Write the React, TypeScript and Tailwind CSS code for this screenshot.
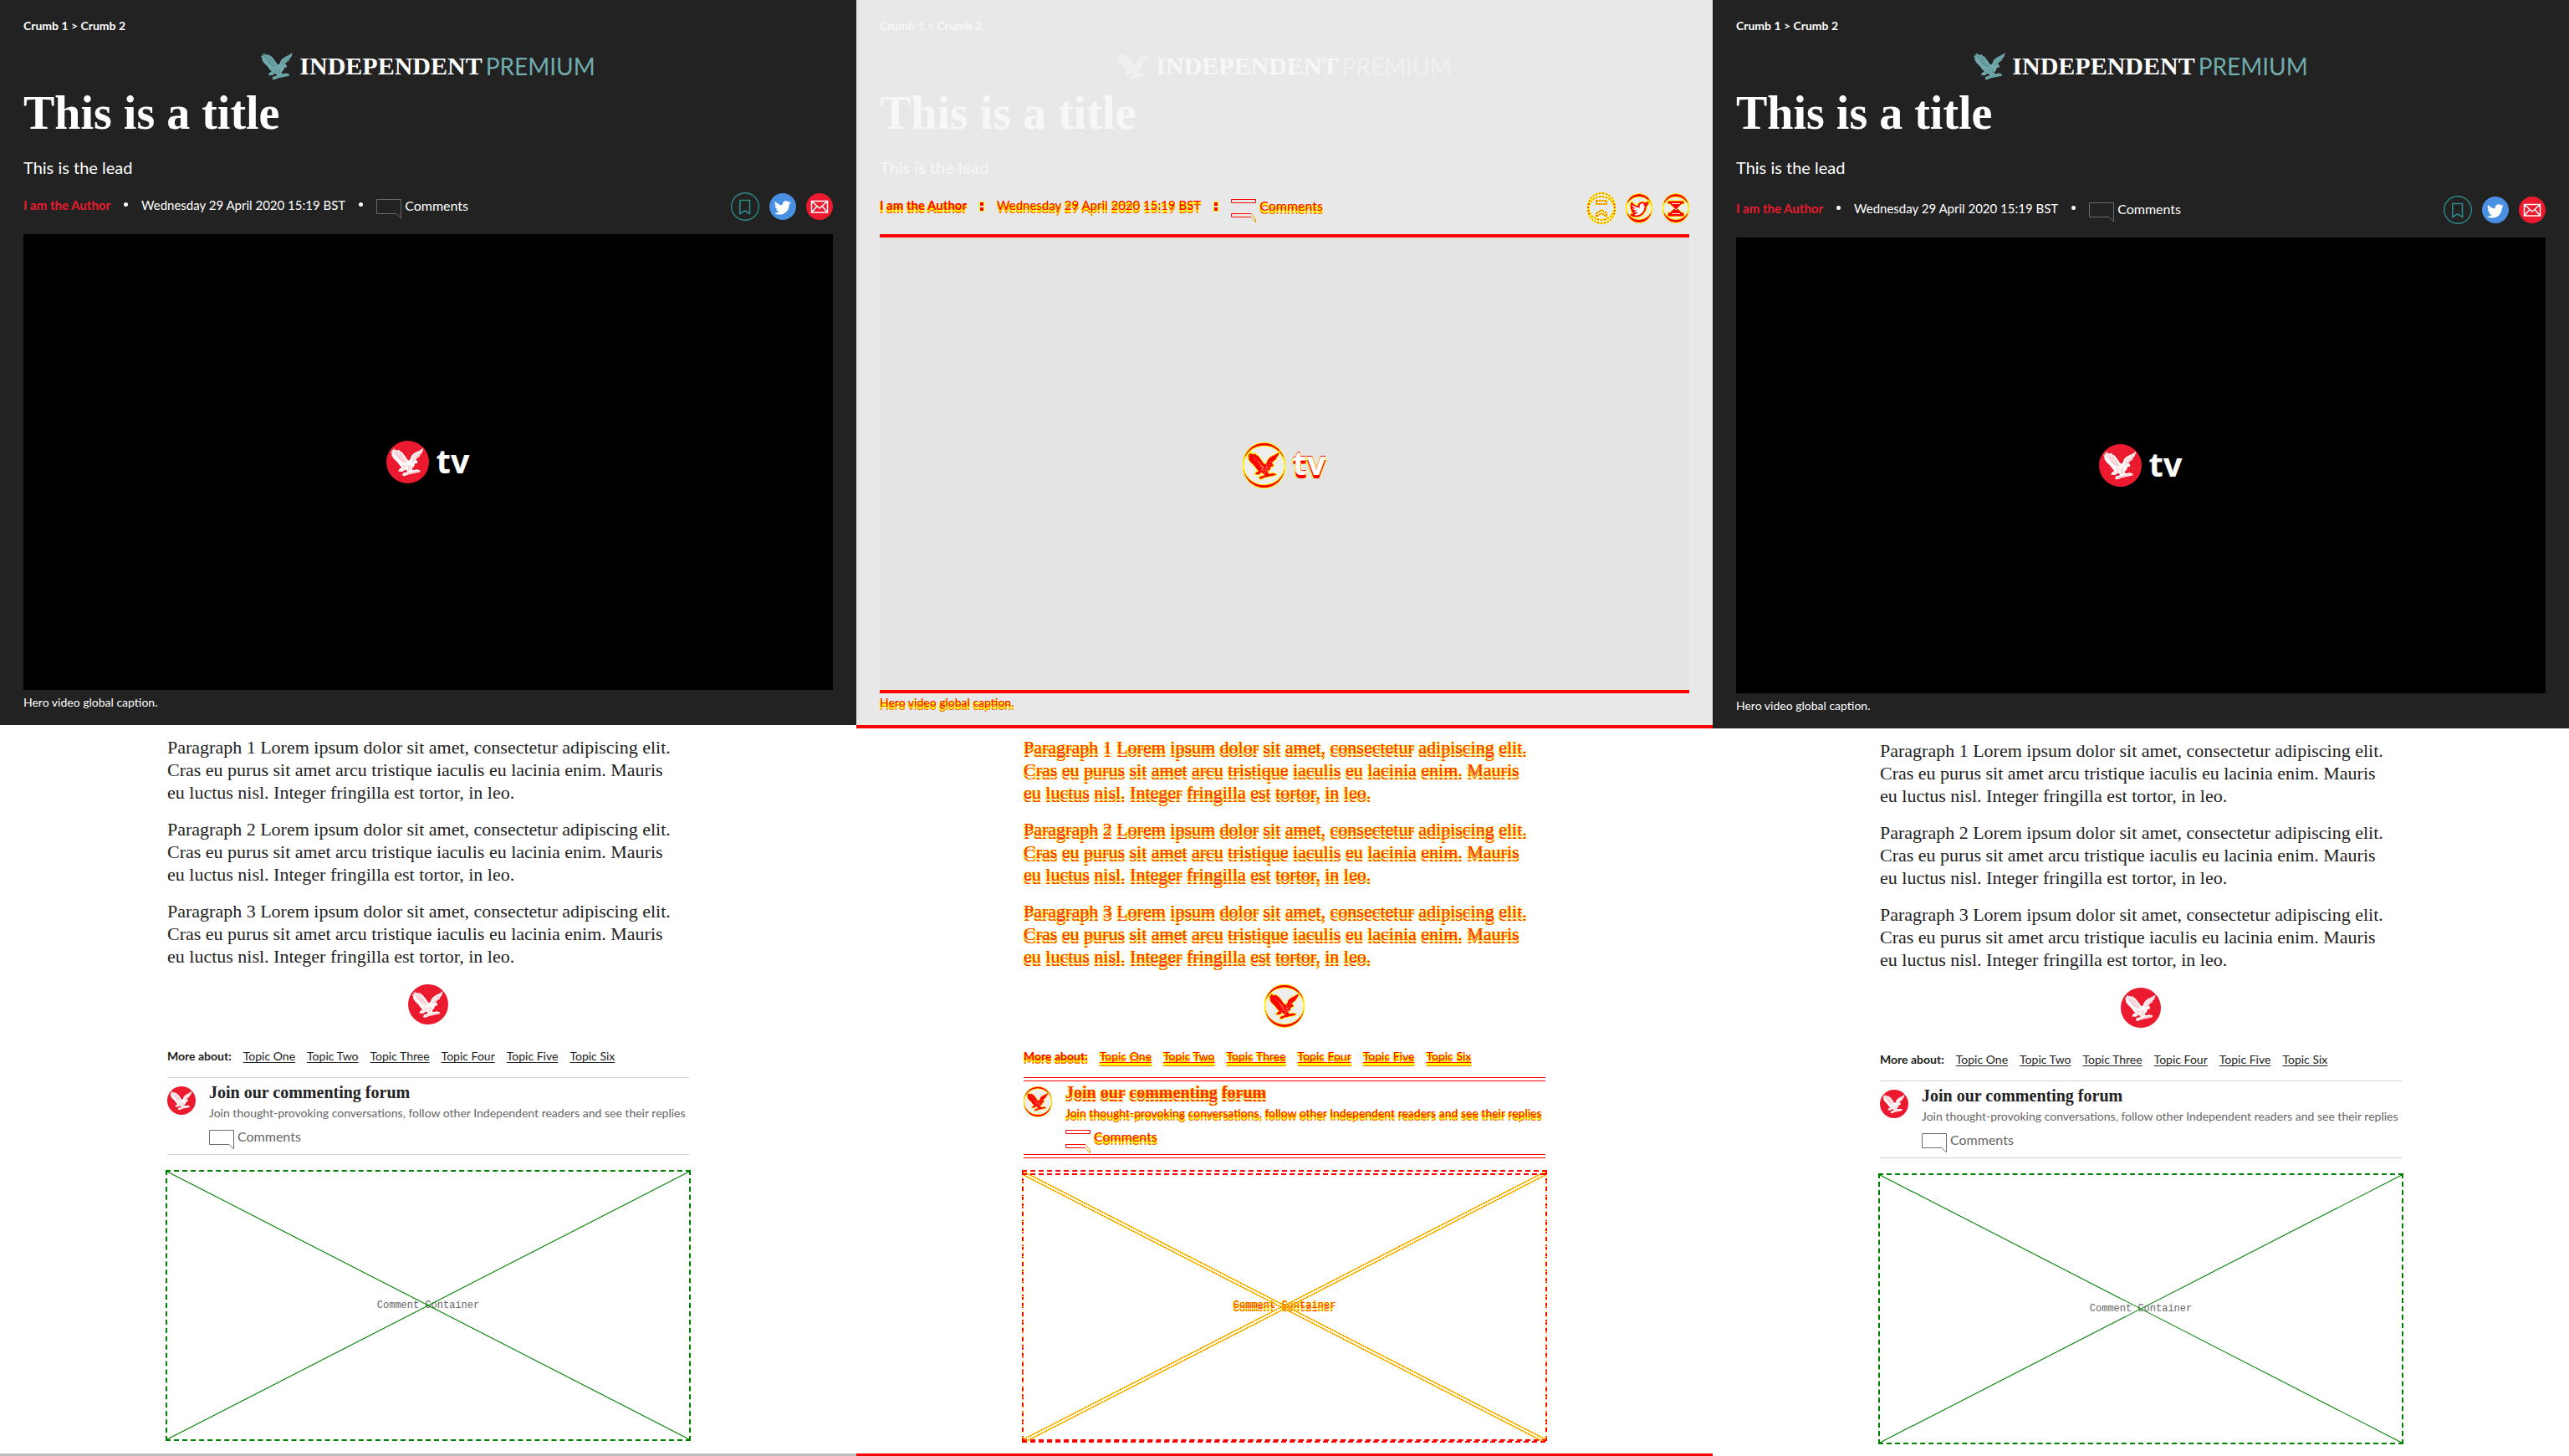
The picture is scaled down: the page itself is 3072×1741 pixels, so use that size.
import React from "react";

type Variant = "before" | "diff" | "after";

const WINGS =
  "M98 106 L103 115 L107 112 L111 117 L116 112 L121 119 L127 121 L137 134 L146 147 L151 152 L157 147 L160 137 L167 129 L176 123 L190 116 L204 107 L201 119 L197 127 L192 131 L193 135 L184 141 L177 148 L183 155 L182 163 L177 161 L173 164 L171 172 L163 180 L166 186 L181 183 L193 187 L191 193 L176 196 L152 201 L137 207 L129 205 L132 196 L144 193 L147 189 L140 184 L129 191 L114 190 L119 181 L127 177 L118 167 L111 157 L99 146 L91 134 L90 130 L94 130 L88 122 L89 118 L94 121 L91 112 L97 115 Z";
const FEATHERS =
  "M96 119 L122 150 M101 117 L128 155 M108 120 L135 161 M115 120 L140 158 M121 125 L144 160 M199 113 L163 142 M198 121 L163 152 M191 130 L166 157 M131 169 L146 172 M127 183 L141 177 M153 168 L150 187 M158 168 L157 185 M139 199 L186 189";

function Bird({ fill, line }: { fill: string; line: string }) {
  return (
    <>
      <path d={WINGS} fill={fill} strokeLinejoin="round" />
      <path d={FEATHERS} stroke={line} strokeWidth="1.3" fill="none" strokeLinecap="round" opacity="0.7" />
    </>
  );
}

function Roundel({ diff, className }: { diff: boolean; className: string }) {
  if (!diff) {
    return (
      <svg viewBox="72 81 152 152" className={className} aria-hidden="true">
        <circle cx="148" cy="157" r="76" fill="#ec1a2e" />
        <Bird fill="#fff" line="#ec1a2e" />
      </svg>
    );
  }
  return (
    <svg viewBox="72 81 152 152" className={className + " overflow-visible"} aria-hidden="true">
      <circle cx="148" cy="157" r="75" fill="red" stroke="yellow" strokeWidth="3" />
      <circle cx="148" cy="169" r="75" fill="red" stroke="yellow" strokeWidth="3" />
      <ellipse cx="148" cy="163" rx="73" ry="69" fill="#eeeeee" stroke="yellow" strokeWidth="3" />
      <g transform="translate(0 6)" stroke="yellow" strokeWidth="3">
        <Bird fill="red" line="red" />
      </g>
      <path
        d="M112 135 L148 172 M135 165 L150 185 M158 160 L148 205 M165 190 L158 170 M142 178 L135 190"
        stroke="#eee"
        strokeWidth="3"
        strokeDasharray="3 6"
      />
      <path d="M128 150 L150 178 M172 150 L158 186" stroke="yellow" strokeWidth="3" strokeDasharray="3 6" />
    </svg>
  );
}

const GLITCH = "text-[#ff0000] [text-shadow:0_2px_0_#ffff00,0_4px_0_#ff6000,-1px_1px_0_#ffff00,1px_3px_0_#ffff00]";
const GLITCH_SERIF =
  "text-[#ff3000] [text-shadow:0_2px_0_#eeeed0,0_4px_0_#ff3000,-1px_0_0_#ffff00,1px_0_0_#ffff00,-1px_4px_0_#ffff00,1px_4px_0_#ffff00]";

function CommentsButton({ v, hero }: { v: Variant; hero: boolean }) {
  const diff = v === "diff";
  const tone = diff ? GLITCH : hero ? "text-white" : "text-[#666]";
  return (
    <button type="button" className={"flex h-6 items-start gap-1 text-[16px] leading-4 " + tone}>
      {diff ? (
        <svg width="30" height="28" viewBox="0 0 30 28" fill="none" stroke="red" aria-hidden="true">
          <path d="M0.5 4 V0.5 H29.5 V4 M0.5 4.5 H29.5 M0.5 21 V17.5 H24 M0.5 21.5 H24" />
          <path d="M24 17.5 L29.5 24 V28 L24 21.5" stroke="#e8a000" />
        </svg>
      ) : (
        <svg width="30" height="24" viewBox="0 0 30 24" fill="none" stroke="#6b6b6b" aria-hidden="true">
          <path d="M0.5 0.5 H29.5 V23 L24 17.5 H0.5 Z" />
        </svg>
      )}
      <span>Comments</span>
    </button>
  );
}

function Share({ diff }: { diff: boolean }) {
  const bird =
    "M25.8 11.2c-.7.3-1.5.6-2.3.6.8-.5 1.500-1.300 1.800-2.200-.8.500-1.700.8-2.600 1a4.100 4.100 0 0 0-7 3.700c-3.400-.2-6.400-1.800-8.400-4.300a4.100 4.100 0 0 0 1.300 5.500c-.7 0-1.300-.2-1.900-.5v.1c0 2 1.400 3.600 3.300 4-.6.2-1.200.2-1.900.1.500 1.600 2 2.800 3.800 2.800a8.300 8.300 0 0 1-6.100 1.700 11.600 11.600 0 0 0 6.300 1.900c7.600 0 11.800-6.400 11.600-12.200.8-.6 1.500-1.300 2.100-2.200z";
  if (diff) {
    return (
      <div className="flex items-center gap-3">
        <button type="button" aria-label="Save">
          <svg width="34" height="34" viewBox="0 0 34 34" fill="none" className="overflow-visible" aria-hidden="true">
            <circle cx="17" cy="17" r="16" stroke="yellow" strokeWidth="2" />
            <circle cx="17" cy="21" r="16" stroke="yellow" strokeWidth="2" />
            <circle cx="17" cy="17" r="16" stroke="red" strokeDasharray="2 2" />
            <circle cx="17" cy="21" r="16" stroke="red" strokeDasharray="2 2" />
            <path d="M11 10 H23 V14 H11 Z M11 25 L17 21 L23 25 V29 L17 25 L11 29 Z" stroke="yellow" strokeWidth="2" />
            <path
              d="M11 10 H23 V14 H11 Z M11 25 L17 21 L23 25 V29 L17 25 L11 29 Z"
              stroke="red"
              strokeDasharray="2 1"
            />
          </svg>
        </button>
        <button type="button" aria-label="Twitter">
          <svg width="32" height="32" viewBox="0 0 32 32" className="overflow-visible" aria-hidden="true">
            <circle cx="16" cy="16" r="15.5" fill="red" stroke="yellow" />
            <circle cx="16" cy="20" r="15.5" fill="red" stroke="yellow" />
            <ellipse cx="16" cy="18" rx="15" ry="13.5" fill="#ececec" stroke="yellow" />
            <path d={bird} transform="translate(0 2)" fill="#fff" stroke="yellow" strokeWidth="4" />
            <path d={bird} transform="translate(0 2)" fill="#fff" stroke="red" strokeWidth="2" />
          </svg>
        </button>
        <button type="button" aria-label="Email">
          <svg width="32" height="32" viewBox="0 0 32 32" className="overflow-visible" aria-hidden="true">
            <circle cx="16" cy="16" r="15.5" fill="red" stroke="yellow" />
            <circle cx="16" cy="20" r="15.5" fill="red" stroke="yellow" />
            <ellipse cx="16" cy="18" rx="15" ry="13.5" fill="#ececec" stroke="yellow" />
            <path
              d="M6 9 H26 V13 H23 L18 18 L23 23 H26 V28 H6 V23 H9 L14 18 L9 13 H6 Z"
              fill="red"
              stroke="yellow"
            />
            <path d="M11 12.500 H21 M11 24.500 H21 M13 17 L16 20 L19 17" stroke="#eee" fill="none" />
          </svg>
        </button>
      </div>
    );
  }
  return (
    <div className="flex items-center gap-3">
      <button type="button" aria-label="Save">
        <svg width="34" height="34" viewBox="0 0 34 34" fill="none" stroke="#2f8788" aria-hidden="true">
          <circle cx="17" cy="17" r="16.3" strokeWidth="1.400" />
          <path d="M10.800 9.500 H22.500 V25.500 L16.700 22 L10.800 25.500 Z" strokeWidth="1.600" />
        </svg>
      </button>
      <button type="button" aria-label="Twitter">
        <svg width="32" height="32" viewBox="0 0 32 32" aria-hidden="true">
          <circle cx="16" cy="16" r="16" fill="#4a90e2" />
          <path d={bird} fill="#fff" />
        </svg>
      </button>
      <button type="button" aria-label="Email">
        <svg width="32" height="32" viewBox="0 0 32 32" aria-hidden="true">
          <circle cx="16" cy="16" r="16" fill="#ec1a2e" />
          <path
            d="M6.500 9.500 H25.500 V23 H6.500 Z M6.500 9.500 L16 18 L25.500 9.500 M6.500 23 L13 15.500 M25.500 23 L19 15.500"
            fill="none"
            stroke="#fff"
            strokeWidth="1.500"
          />
        </svg>
      </button>
    </div>
  );
}

function Dot({ diff }: { diff: boolean }) {
  return diff ? (
    <span className="mt-3 h-2.5 w-1 border-y-4 border-[#ff0000] bg-[#e8e8e8] outline outline-[#ffff00]" />
  ) : (
    <span className="mt-3 size-[5px] rounded-full bg-white" />
  );
}

const PARAGRAPHS = [1, 2, 3].map(
  (n) =>
    `Paragraph ${n} Lorem ipsum dolor sit amet, consectetur adipiscing elit. Cras eu purus sit amet arcu tristique iaculis eu lacinia enim. Mauris eu luctus nisl. Integer fringilla est tortor, in leo.`,
);
const TOPICS = ["One", "Two", "Three", "Four", "Five", "Six"];

function CommentBox({ diff }: { diff: boolean }) {
  return (
    <div
      className={
        "relative mx-[-2px] mt-[18px] grid h-[324px] place-items-center border-2 border-dashed " +
        (diff ? "border-[#ff0000]" : "border-[#008000]")
      }
    >
      <span
        className={
          "font-['Liberation_Mono',monospace] text-[12px] leading-4 " + (diff ? GLITCH_SERIF : "text-[#666]")
        }
      >
        Comment Container
      </span>
      <svg
        className="absolute inset-0 size-full overflow-visible"
        viewBox="0 0 624 320"
        preserveAspectRatio="none"
        fill="none"
        aria-hidden="true"
      >
        {diff ? (
          <>
            <path d="M0 0 L624 320 M0 320 L624 0 M0 4 L624 324 M0 324 L624 4" stroke="#ffe600" strokeWidth="1.6" />
            <path
              d="M0 0 L624 320 M0 320 L624 0 M0 4 L624 324 M0 324 L624 4"
              stroke="#ff3000"
              strokeDasharray="1.500 1.500"
            />
            <path d="M-2 3 H626 M-2 323 H626" stroke="red" strokeWidth="2" strokeDasharray="6 4" />
            <path d="M-1 5 V320 M625 5 V320" stroke="yellow" strokeWidth="2" strokeDasharray="1 5" />
          </>
        ) : (
          <path d="M0 0 L624 320 M0 320 L624 0" stroke="#008000" strokeWidth="1.1" />
        )}
      </svg>
    </div>
  );
}

function Article({ v }: { v: Variant }) {
  const diff = v === "diff";
  const faint = diff ? "text-[#f7f7f7]" : "text-white";
  const ink = diff ? GLITCH : "text-[#222]";
  return (
    <article className="flex min-w-0 flex-col bg-white">
      <header
        className={
          "flex flex-col px-7 pb-[17px] " + (diff ? "border-b-4 border-[#ff0000] bg-[#e8e8e8]" : "bg-[#222]")
        }
      >
        <nav aria-label="Breadcrumb" className={"pt-5 text-[14px] font-bold leading-[22px] " + faint}>
          <a href="#crumb-1">Crumb 1</a> &gt; <a href="#crumb-2">Crumb 2</a>
        </nav>
        <div className="mt-5 flex h-[34px] items-center justify-center leading-[34px]">
          <svg width="38" height="34" viewBox="87 105 118 103" aria-hidden="true">
            <Bird fill={diff ? "#f0f0f0" : "#71abad"} line={diff ? "#e8e8e8" : "#335152"} />
          </svg>
          <span className={"ml-2 font-['Liberation_Serif',serif] text-[30px] font-bold " + faint}>INDEPENDENT</span>
          <span className={"ml-1 text-[28px] " + (diff ? "text-[#f0f0f0]" : "text-[#71abad]")}>PREMIUM</span>
        </div>
        <h1 className={"mt-2 font-['Liberation_Serif',serif] text-[56px] font-bold leading-[62px] " + faint}>
          This is a title
        </h1>
        <p className={"mt-5 text-[20px] leading-7 " + faint}>This is the lead</p>
        <div className={"flex items-start justify-between " + (v === "after" ? "mt-5" : "mt-4")}>
          <div className="flex items-start gap-4 text-[15px] leading-[22px]">
            <a href="#author" className={"mt-1 font-bold " + (diff ? GLITCH : "text-[#ec1a2e]")}>
              I am the Author
            </a>
            <Dot diff={diff} />
            <time className={"mt-1 " + (diff ? GLITCH : "text-white")}>Wednesday 29 April 2020 15:19 BST</time>
            <Dot diff={diff} />
            <div className="mt-2">
              <CommentsButton v={v} hero />
            </div>
          </div>
          <Share diff={diff} />
        </div>
        <div
          className={
            "mt-4 flex aspect-[968/545] items-center justify-center gap-2 " +
            (diff ? "border-t-4 border-[#ff0000] bg-[#e4e4e4]" : "bg-black")
          }
        >
          <Roundel diff={diff} className="size-[51px]" />
          <span
            className={
              "pb-1 font-['Open_Sans',sans-serif] text-[40px] font-bold leading-[50px] " +
              (diff
                ? "text-white [text-shadow:0_-1px_0_#ff0000,0_4px_0_#ff0000,-1px_0_0_#ffff00,1px_0_0_#ffff00,-1px_4px_0_#ffff00,1px_4px_0_#ffff00]"
                : "text-white")
            }
          >
            tv
          </span>
        </div>
        <p
          className={
            "text-[14px] leading-5 " + (diff ? "border-t-4 border-[#ff0000] pt-px " + GLITCH : "pt-[5px] text-white")
          }
        >
          Hero video global caption.
        </p>
      </header>
      <div className={"mx-auto flex w-full max-w-[624px] flex-col " + (diff ? "pt-[9px]" : "pt-[13px]")}>
        <div
          className={
            "flex flex-col gap-[17px] pr-3 font-['Liberation_Serif',serif] text-[22px] leading-[27px] " +
            (diff ? GLITCH_SERIF : "text-[#222]")
          }
        >
          {PARAGRAPHS.map((p) => (
            <p key={p}>{p}</p>
          ))}
        </div>
        <Roundel diff={diff} className="mx-auto mt-5 size-12" />
        <div className={"mt-7 flex gap-[14px] text-[14px] leading-5 " + ink}>
          <strong>More about:</strong>
          {TOPICS.map((t) => (
            <a key={t} href={"#topic-" + t.toLowerCase()} className="underline underline-offset-2">
              Topic {t}
            </a>
          ))}
        </div>
        <section
          className={
            "mt-[15px] flex gap-4 border-y pb-[5px] pt-1.5 " +
            (diff
              ? "border-[#ff0000] shadow-[0_3px_0_#fff,0_4px_0_#ff0000,inset_0_3px_0_#fff,inset_0_4px_0_#ff0000]"
              : "border-[#d0d0d0]")
          }
        >
          <Roundel diff={diff} className="mt-1 size-[34px] shrink-0" />
          <div className="min-w-0">
            <h2
              className={
                "font-['Liberation_Serif',serif] text-[20px] font-bold leading-[22px] " +
                (diff ? GLITCH_SERIF : "text-[#222]")
              }
            >
              Join our commenting forum
            </h2>
            <p className={"mt-1 mb-2.5 whitespace-nowrap text-[14px] leading-5 " + (diff ? GLITCH : "text-[#666]")}>
              Join thought-provoking conversations, follow other Independent readers and see their replies
            </p>
            <CommentsButton v={v} hero={false} />
          </div>
        </section>
        <CommentBox diff={diff} />
      </div>
      {v !== "after" && <div className={"mt-[15px] h-[3px] " + (diff ? "bg-[#ff0000]" : "bg-[#c0c0c0]")} />}
    </article>
  );
}

export default function App() {
  return (
    <main className="grid grid-cols-3 overflow-hidden bg-white font-['Lato',sans-serif]">
      <Article v="before" />
      <Article v="diff" />
      <Article v="after" />
    </main>
  );
}
